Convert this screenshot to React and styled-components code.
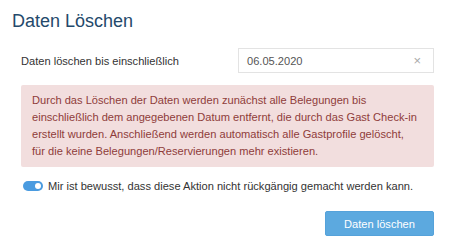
import React, { useState } from "react";
import styled, { createGlobalStyle } from "styled-components";

const Global = createGlobalStyle`
  html, body { margin: 0; padding: 0; background: #fff; }
  body { font-family: "Liberation Sans", Arial, sans-serif; }
`;

const Page = styled.div`
  width: 450px;
  height: 251px;
  box-sizing: border-box;
  background: #fff;
  padding-top: 10px;
  overflow: hidden;
`;

const Title = styled.h1`
  margin: 0 0 0 12px;
  font-size: 18px;
  line-height: 22px;
  font-weight: 400;
  color: #24496b;
`;

const Body = styled.div`
  padding: 16px 16px 0 21px;
  display: flex;
  flex-direction: column;
`;

const FieldRow = styled.div`
  display: flex;
  align-items: center;
  justify-content: space-between;
  height: 25px;
`;

const Label = styled.label`
  font-size: 11.1px;
  color: #333;
`;

const DateBox = styled.div`
  width: 196px;
  height: 25px;
  box-sizing: border-box;
  border: 1px solid #e3e3e3;
  display: flex;
  align-items: center;
  justify-content: space-between;
  padding: 0 12px 0 8px;
  font-size: 11.1px;
  color: #555;
`;

const Clear = styled.span`
  color: #aaa;
  font-size: 13px;
  line-height: 1;
`;

const Alert = styled.div`
  margin-top: 12px;
  background: #f2dede;
  color: #8f3c3a;
  font-size: 11.1px;
  line-height: 17px;
  padding: 7px 11px 7px 11px;
  border-radius: 2px;
  white-space: nowrap;
`;

const ToggleRow = styled.div`
  margin-top: 10px;
  display: flex;
  align-items: center;
  gap: 5px;
  height: 18px;
  font-size: 11.1px;
  color: #333;
  padding-left: 2px;
  white-space: nowrap;
`;

const Switch = styled.span`
  position: relative;
  width: 20px;
  height: 10px;
  border-radius: 5px;
  background: ${(p) => (p.$on ? "#4a9be0" : "#ccc")};
  flex: none;
  &::after {
    content: "";
    position: absolute;
    top: 2px;
    left: ${(p) => (p.$on ? "12px" : "2px")};
    width: 6px;
    height: 6px;
    border-radius: 50%;
    background: #fff;
  }
`;

const Actions = styled.div`
  margin-top: 16px;
  display: flex;
  justify-content: flex-end;
`;

const Button = styled.button`
  width: 109px;
  height: 25px;
  border: 1px solid #55a2da;
  border-radius: 2px;
  background: #5ca9df;
  color: #fff;
  font-family: "Liberation Sans", Arial, sans-serif;
  font-size: 11.1px;
  padding: 0;
`;

export default function App() {
  const [on] = useState(true);
  return (
    <Page>
      <Global />
      <Title>Daten Löschen</Title>
      <Body>
        <FieldRow>
          <Label>Daten löschen bis einschließlich</Label>
          <DateBox>
            <span>06.05.2020</span>
            <Clear>×</Clear>
          </DateBox>
        </FieldRow>
        <Alert>
          Durch das Löschen der Daten werden zunächst alle Belegungen bis
          <br />
          einschließlich dem angegebenen Datum entfernt, die durch das Gast Check-in
          <br />
          erstellt wurden. Anschließend werden automatisch alle Gastprofile gelöscht,
          <br />
          für die keine Belegungen/Reservierungen mehr existieren.
        </Alert>
        <ToggleRow>
          <Switch $on={on} />
          <span>Mir ist bewusst, dass diese Aktion nicht rückgängig gemacht werden kann.</span>
        </ToggleRow>
        <Actions>
          <Button>Daten löschen</Button>
        </Actions>
      </Body>
    </Page>
  );
}
